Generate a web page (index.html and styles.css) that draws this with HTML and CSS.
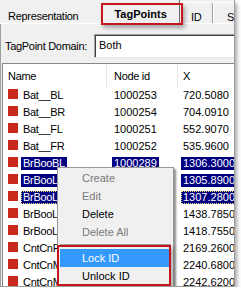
FILE: index.html
```html
<!DOCTYPE html>
<html>
<head>
	<meta charset="UTF-8">
	<title>TagPoints</title>
	<link rel="stylesheet" href="styles.css">
</head>
<body>
	<div class="window">
		<div class="tabs">
			<div class="tab first">Representation</div>
			<div class="tab active">TagPoints</div>
			<div class="tab id">ID</div>
			<div class="tab last">S</div>
		</div>
		<div class="panel">
			<div class="domain">
				<span class="label">TagPoint Domain:</span>
				<div class="combo">Both</div>
			</div>
			<div class="list">
				<div class="head">
					<div class="hc c1">Name</div>
					<div class="hc c2">Node id</div>
					<div class="hc c3">X</div>
				</div>
				<div class="row">
					<div class="c1"><i class="sq"></i><span>Bat__BL</span></div>
					<div class="c2"><span>1000253</span></div>
					<div class="c3"><span>720.5080</span></div>
				</div>
				<div class="row">
					<div class="c1"><i class="sq"></i><span>Bat__BR</span></div>
					<div class="c2"><span>1000254</span></div>
					<div class="c3"><span>704.0910</span></div>
				</div>
				<div class="row">
					<div class="c1"><i class="sq"></i><span>Bat__FL</span></div>
					<div class="c2"><span>1000251</span></div>
					<div class="c3"><span>552.9070</span></div>
				</div>
				<div class="row">
					<div class="c1"><i class="sq"></i><span>Bat__FR</span></div>
					<div class="c2"><span>1000252</span></div>
					<div class="c3"><span>535.9600</span></div>
				</div>
				<div class="row sel">
					<div class="c1"><i class="sq"></i><span>BrBooBL</span></div>
					<div class="c2"><span>1000289</span></div>
					<div class="c3"><span>1306.3000</span></div>
				</div>
				<div class="row sel">
					<div class="c1"><i class="sq"></i><span>BrBooLBR</span></div>
					<div class="c2"><span>1000290</span></div>
					<div class="c3"><span>1305.8900</span></div>
				</div>
				<div class="row sel focus">
					<div class="c1"><i class="sq"></i><span>BrBooLFL</span></div>
					<div class="c2"><span>1000287</span></div>
					<div class="c3"><span>1307.2800</span></div>
				</div>
				<div class="row">
					<div class="c1"><i class="sq"></i><span>BrBooLFR</span></div>
					<div class="c2"><span>1000288</span></div>
					<div class="c3"><span>1438.7850</span></div>
				</div>
				<div class="row">
					<div class="c1"><i class="sq"></i><span>BrBooLRR</span></div>
					<div class="c2"><span>1000291</span></div>
					<div class="c3"><span>1418.7550</span></div>
				</div>
				<div class="row">
					<div class="c1"><i class="sq"></i><span>CntCnPL</span></div>
					<div class="c2"><span>1000301</span></div>
					<div class="c3"><span>2169.2600</span></div>
				</div>
				<div class="row">
					<div class="c1"><i class="sq"></i><span>CntCnML</span></div>
					<div class="c2"><span>1000302</span></div>
					<div class="c3"><span>2240.6800</span></div>
				</div>
				<div class="row">
					<div class="c1"><i class="sq"></i><span>CntCnMR</span></div>
					<div class="c2"><span>1000303</span></div>
					<div class="c3"><span>2242.6200</span></div>
				</div>
			</div>
		</div>

		<!-- context menu -->
		<div class="menu">
			<div class="item off">Create</div>
			<div class="item off">Edit</div>
			<div class="item">Delete</div>
			<div class="item off">Delete All</div>
			<div class="sep"></div>
			<div class="item hot">Lock ID</div>
			<div class="item">Unlock ID</div>
		</div>

		<!-- red callouts -->
		<div class="mark mark-tab"></div>
		<div class="mark mark-menu"></div>
	</div>
</body>
</html>
```

FILE: styles.css
```css
*{
	padding: 0;
	margin: 0;
	box-sizing: border-box;
}
body{
	background: #fff;
	font-family: "Liberation Sans", Arial, sans-serif;
	font-size: 11px;
	color: #000;
}
.window{
	width: 235px;
	height: 287px;
	position: relative;
	overflow: hidden;
	background: #f0f0f0;
	border-right: 1px solid #9c9c9c;
	border-bottom: 1px solid #9c9c9c;
	box-shadow: 2px 3px 4px rgba(0,0,0,0.35);
}

/* tabs */
.tabs{
	display: flex;
	height: 24px;
	border-bottom: 1px solid #fff;
	white-space: nowrap;
}
.tab{
	height: 23px;
	padding-top: 10px;
	line-height: 13px;
	letter-spacing: -0.3px;
}
.first{
	width: 101px;
	padding-left: 8px;
}
.active{
	width: 80px;
	padding-top: 8px;
	padding-left: 14px;
	font-weight: bold;
	letter-spacing: 0;
	border-right: 1px solid #696969;
}
.id{
	width: 33px;
	padding-left: 11px;
	margin-top: 2px;
	height: 21px;
	padding-top: 8px;
	border-top: 1px solid #fff;
	border-right: 1px solid #a0a0a0;
	border-top-right-radius: 3px;
}
.last{
	flex: 1;
	padding-left: 13px;
	margin-top: 2px;
	height: 21px;
	padding-top: 8px;
	border-top: 1px solid #fff;
	border-left: 1px solid #fff;
}

/* panel */
.panel{
	border-left: 1px solid #a0a0a0;
	padding-top: 10px;
	padding-left: 1px;
}
.domain{
	display: flex;
	align-items: center;
	height: 24px;
}
.label{
	width: 92px;
	padding-left: 3px;
	letter-spacing: -0.3px;
	white-space: nowrap;
}
.combo{
	flex: 1;
	height: 24px;
	margin-right: -20px;
	padding-left: 4px;
	line-height: 21px;
	background: #fff;
	border-top: 1px solid #a0a0a0;
	border-left: 1px solid #a0a0a0;
	border-bottom: 1px solid #e3e3e3;
	box-shadow: inset 1px 1px 0 #404040;
}

/* list */
.list{
	margin-top: 5px;
	margin-right: -20px;
	background: #fff;
	border-top: 1px solid #828790;
	border-left: 1px solid #828790;
	height: 240px;
	white-space: nowrap;
}
.head, .row{
	display: grid;
	grid-template-columns: 104px 71px 1fr;
}
.head{
	height: 23px;
}
.hc{
	padding-top: 2px;
	line-height: 21px;
	border-right: 1px solid #e5e5e5;
}
.head .c1{ padding-left: 5px; letter-spacing: -0.3px; }
.head .c2{ padding-left: 7px; letter-spacing: -0.3px; }
.head .c3{ padding-left: 5px; border-right: none; }

.row{
	height: 17px;
}
.row > div{
	display: flex;
	align-items: flex-start;
	padding-top: 2px;
	overflow: hidden;
}
.row span{
	line-height: 13px;
	padding: 0 2px;
}
.row .c1{
	padding-left: 5px;
	letter-spacing: -0.3px;
}
.row .c2{ padding-left: 5px; }
.row .c3{ padding-left: 3px; }
.sq{
	display: block;
	width: 10px;
	height: 10px;
	margin-right: 3px;
	background: #c9281c;
}
.sel span{
	background: #000080;
	color: #fff;
}
.focus span{
	outline: 1px dotted #f2e27a;
	outline-offset: -1px;
}

/* context menu */
.menu{
	position: absolute;
	left: 57px;
	top: 167px;
	width: 117px;
	padding: 1px 2px;
	background: #f0f0f0;
	border: 1px solid #979797;
	box-shadow: 2px 2px 2px rgba(0,0,0,0.45);
}
.item{
	height: 18px;
	line-height: 18px;
	padding-left: 22px;
}
.off{
	color: #7a7a7a;
}
.hot{
	background: #3399ff;
	color: #fff;
}
.sep{
	height: 8px;
	padding-top: 3px;
}
.sep:before{
	content: "";
	display: block;
	border-top: 1px solid #a0a0a0;
	border-bottom: 1px solid #fff;
}

/* callouts */
.mark{
	position: absolute;
	border: 2px solid #c4171d;
	box-shadow: 2px 3px 4px rgba(0,0,0,0.3);
}
.mark-tab{
	left: 101px;
	top: 3px;
	width: 82px;
	height: 22px;
}
.mark-menu{
	left: 57px;
	top: 245px;
	width: 114px;
	height: 41px;
}
```
